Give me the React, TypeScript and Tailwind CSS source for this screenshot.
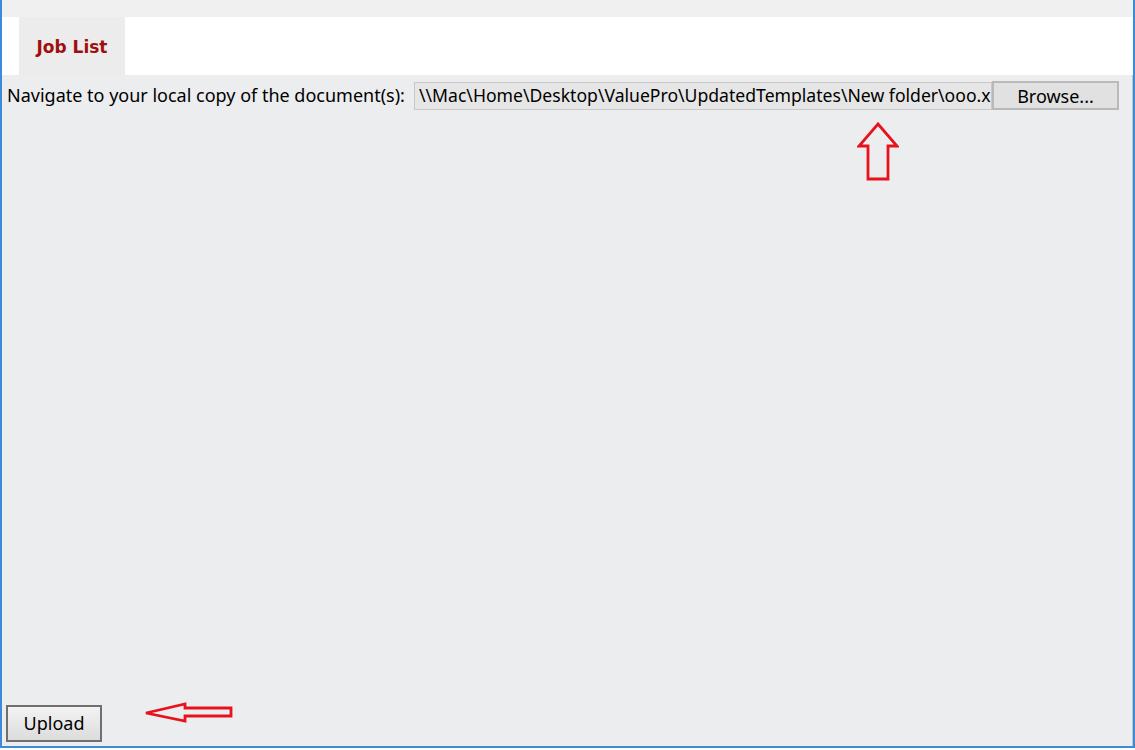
export default function App() {
  const font = { fontFamily: '"Noto Sans", "Open Sans", sans-serif' };
  return (
    <div className="w-[1135px] h-[750px] overflow-hidden bg-[#f0f0f0] flex flex-col" style={font}>
      <div className="flex-1 flex flex-col border-l-2 border-r-2 border-b-2 border-[#3c8ad8] min-h-0">
        {/* top strip */}
        <div className="h-[17px] bg-[#f0f0f0] shrink-0" />
        {/* tab row */}
        <div className="h-[58px] bg-white flex shrink-0 pl-[17px]">
          <div className="w-[106px] bg-[#ececec] flex items-center justify-center pt-[3px]">
            <span className="text-[#a00f0f] font-bold text-[17px]" style={{ fontFamily: '"DejaVu Sans", Verdana, sans-serif' }}>
              Job List
            </span>
          </div>
        </div>
        {/* content */}
        <div className="flex-1 bg-[#ecedef] flex flex-col border-r border-[#c4c4c4] min-h-0">
          <div className="flex items-center pt-[6px] pl-[5px] pr-[13px]">
            <span className="text-[18px] text-black whitespace-nowrap w-[407px]">Navigate to your local copy of the document(s):</span>
            <div className="h-[28px] flex-1 min-w-0 bg-[#e6e6e6] border border-[#c8c8c8] flex items-center pl-[4px] overflow-hidden">
              <span className="text-[17.6px] whitespace-nowrap text-black">\\Mac\Home\Desktop\ValuePro\UpdatedTemplates\New folder\ooo.x</span>
            </div>
            <button className="h-[29px] w-[127px] shrink-0 bg-[#e1e1e1] border-2 border-[#b9b9b9] text-[18px] text-black">
              Browse...
            </button>
          </div>
          <div className="flex justify-end pr-[233px] pt-[12px]">
            <svg width="42" height="60" viewBox="0 0 42 60">
              <path d="M21 2 L40 24 L31 24 L31 57 L11 57 L11 24 L2 24 Z" fill="none" stroke="#e8121c" strokeWidth="2.8" strokeLinejoin="miter" />
            </svg>
          </div>
          <div className="flex-1" />
          <div className="flex items-start pl-[4px] pb-[4px]">
            <button className="h-[37px] w-[96px] border-2 border-[#6f6f6f] bg-gradient-to-b from-[#f3f3f3] to-[#dcdcdc] text-[18px] text-black">
              Upload
            </button>
            <svg className="ml-[42px] -mt-[3px]" width="90" height="22" viewBox="0 0 90 22">
              <path d="M2 11 L41 2 L41 6 L87 6 L87 14 L41 14 L41 19 Z" fill="none" stroke="#e8121c" strokeWidth="2.8" />
            </svg>
          </div>
        </div>
      </div>
      <div className="h-[2px] bg-white shrink-0" />
    </div>
  );
}
